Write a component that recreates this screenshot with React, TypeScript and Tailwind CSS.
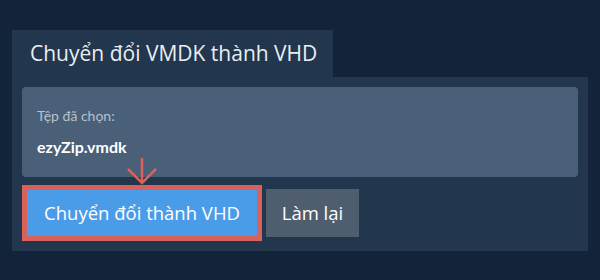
export default function App() {
  return (
    <div className="h-[280px] w-[600px] bg-[#13243a] px-3 pt-[30px] font-['Lato',sans-serif]">
      <div className="flex">
        <div className="flex h-[47px] w-[321px] items-center bg-[#22364d] pl-[18px] font-['Open_Sans',sans-serif] text-[21px] text-[#e9eef3]">
          Chuyển đổi VMDK thành VHD
        </div>
      </div>
      <div className="relative flex flex-col gap-2 bg-[#22364d] p-[10px]">
        <div className="flex h-[90px] flex-col justify-center rounded-[4px] bg-[#4a6078] pl-[15px]">
          <div className="text-[14px] leading-[18px] text-[#b7c1cc]">Tệp đã chọn:</div>
          <div className="mt-[12px] text-[16px] font-bold leading-[20px] text-white">ezyZip.vmdk</div>
        </div>
        <div className="flex items-center gap-1 font-['Open_Sans',sans-serif]">
          <button
            type="button"
            className="h-[56px] w-[240px] border-[5px] border-[#d9615c] bg-[#4b9ce8] text-[18.5px] text-white"
          >
            Chuyển đổi thành VHD
          </button>
          <button
            type="button"
            className="h-[48px] w-[93px] bg-[#4f5e6f] text-[18.5px] text-white"
          >
            Làm lại
          </button>
        </div>
        <svg
          className="absolute left-[115px] top-[81px]"
          width="30"
          height="27"
          viewBox="0 0 30 27"
          fill="none"
          stroke="#de605b"
          strokeWidth="2.5"
        >
          <path d="M15 0 V24" />
          <path d="M1 11 L15 25 L29 11" />
        </svg>
      </div>
    </div>
  );
}
